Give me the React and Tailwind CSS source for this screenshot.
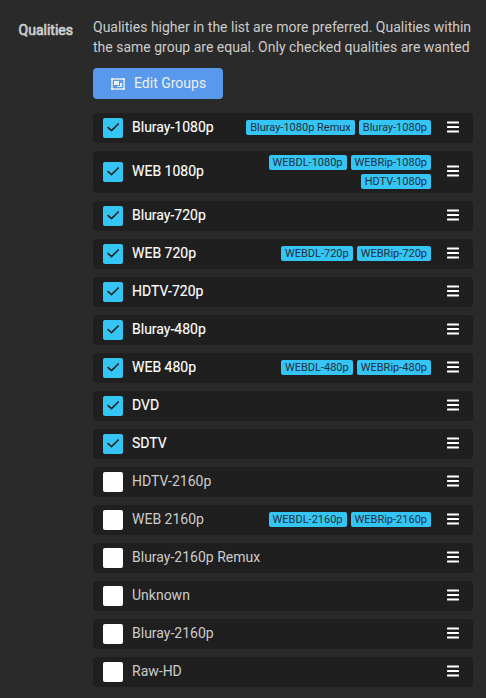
import React from "react";

const qualities = [
  { name: "Bluray-1080p", checked: true, tags: ["Bluray-1080p Remux", "Bluray-1080p"] },
  { name: "WEB 1080p", checked: true, tags: ["WEBDL-1080p", "WEBRip-1080p", "HDTV-1080p"] },
  { name: "Bluray-720p", checked: true, tags: [] },
  { name: "WEB 720p", checked: true, tags: ["WEBDL-720p", "WEBRip-720p"] },
  { name: "HDTV-720p", checked: true, tags: [] },
  { name: "Bluray-480p", checked: true, tags: [] },
  { name: "WEB 480p", checked: true, tags: ["WEBDL-480p", "WEBRip-480p"] },
  { name: "DVD", checked: true, tags: [] },
  { name: "SDTV", checked: true, tags: [] },
  { name: "HDTV-2160p", checked: false, tags: [] },
  { name: "WEB 2160p", checked: false, tags: ["WEBDL-2160p", "WEBRip-2160p"] },
  { name: "Bluray-2160p Remux", checked: false, tags: [] },
  { name: "Unknown", checked: false, tags: [] },
  { name: "Bluray-2160p", checked: false, tags: [] },
  { name: "Raw-HD", checked: false, tags: [] },
];

function Checkbox({ checked }) {
  return (
    <span
      className={`flex h-5 w-5 shrink-0 items-center justify-center rounded-[2px] ${
        checked ? "bg-[#35c5f4]" : "bg-white"
      }`}
    >
      {checked && (
        <svg viewBox="0 0 20 20" className="h-5 w-5" fill="none" stroke="#202020" strokeWidth="1.6">
          <path d="M4.6 9.2 8.5 12.6 15.7 5.5" />
        </svg>
      )}
    </span>
  );
}

function DragHandle() {
  return (
    <svg viewBox="0 0 12 14" className="mb-[2px] ml-4 h-[14px] w-[12px] shrink-0" fill="#ffffff">
      <rect x="0" y="1.6" width="12" height="1.8" rx="0.3" />
      <rect x="0" y="6.1" width="12" height="1.8" rx="0.3" />
      <rect x="0" y="10.6" width="12" height="1.8" rx="0.3" />
    </svg>
  );
}

function GroupIcon() {
  return (
    <svg viewBox="0 0 14 12" className="mr-[9px] h-3 w-[14px]" fill="#eeeeee">
      <path d="M1 1H13V11H1Z" fill="none" stroke="#eeeeee" strokeWidth="2" opacity="0.7" />
      <path d="M0 0H2V2H0ZM12 0H14V2H12ZM0 10H2V12H0ZM12 10H14V12H12Z" />
      <path d="M3 3H8V7H3Z" />
      <path d="M9 5H11V9H6V8H9Z" />
    </svg>
  );
}

function QualityRow({ name, checked, tags }) {
  return (
    <li className="flex min-h-[30px] items-center rounded-[4px] bg-[#1f1f1f] pr-[14px] pl-[10px]">
      <Checkbox checked={checked} />
      <span
        className={`mb-[2px] ml-[9px] text-[14px] leading-5 whitespace-nowrap ${
          checked ? "text-white [-webkit-text-stroke:0.12px_#ffffff]" : "text-[#cccccc]"
        }`}
      >
        {name}
      </span>
      <div className="ml-auto flex min-h-6 w-[190px] flex-wrap content-start justify-end gap-1 py-1">
        {tags.map((tag) => (
          <span
            key={tag}
            className="h-[15px] rounded-[2px] bg-[#35c5f4] px-[4px] text-[11px] leading-[15px] whitespace-nowrap text-[#20303c]"
          >
            {tag}
          </span>
        ))}
      </div>
      <DragHandle />
    </li>
  );
}

export default function App() {
  return (
    <main className="flex h-[698px] w-[486px] overflow-hidden bg-[#2a2a2a] pt-[17px] font-['Roboto',sans-serif] text-[14px] text-[#cccccc]">
      <h2 className="w-[73px] shrink-0 pt-[3px] text-right text-[14px] leading-5 font-normal [-webkit-text-stroke:0.7px_#cccccc]">
        Qualities
      </h2>
      <section className="ml-[20px] w-[380px]">
        <p className="text-[14px] leading-5 whitespace-nowrap">
          Qualities higher in the list are more preferred. Qualities within
          <br />
          the same group are equal. Only checked qualities are wanted
        </p>
        <button className="mt-[11px] flex h-[31px] w-[130px] items-center rounded-[4px] bg-[#5899eb] pl-[18px] text-[14px] text-[#eeeeee]">
          <GroupIcon />
          Edit Groups
        </button>
        <ul className="mt-[14px] flex flex-col gap-2">
          {qualities.map((q) => (
            <QualityRow key={q.name} {...q} />
          ))}
        </ul>
      </section>
    </main>
  );
}
